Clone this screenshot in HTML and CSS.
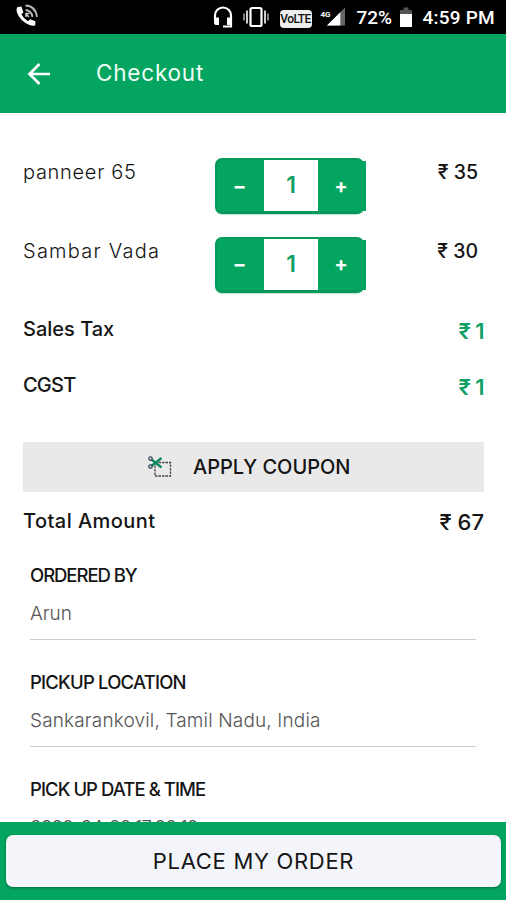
FILE: index.html
```html
<!DOCTYPE html>
<html lang="en">
<head>
<meta charset="utf-8">
<title>Checkout</title>
<link rel="stylesheet" href="styles.css">
</head>
<body>
<div class="screen">
  <div class="status">
    <svg class="call" width="24" height="24" viewBox="0 0 24 24" fill="#fff"><path d="M2.200 3.200 6.500 2.600 8.400 8.400 6.400 10.300Q8.600 14.800 13 17.200L15.200 15.200 20.400 17.200 20.200 21.200Q18 22.300 14.500 21Q5 17.300 1.900 8.300Q1 4.600 2.200 3.200Z"/><g fill="none" stroke="#bbb" stroke-width="1.800"><path d="M10.500 6Q16.500 6.500 17.500 13"/><path d="M10.500 1.500Q20.500 2 22 13"/></g><path d="M10.500 9.500 14 13M11 13V9.500H14.500" fill="none" stroke="#ccc" stroke-width="1.500"/></svg>
    <div class="status-right">
      <svg class="headset" width="20" height="23" viewBox="0 0 20 23"><path d="M2 13V9.500a8 8 0 0 1 16 0V20.500H10" fill="none" stroke="#fff" stroke-width="2.200"/><path d="M1 11.500H6V19H3Q1 19 1 17ZM14 11.500H19V19H14Z" fill="#fff"/></svg>
      <svg class="vibrate" width="26" height="22" viewBox="0 0 26 22" fill="none" stroke="#fff"><rect x="7.500" y="2" width="11" height="18" rx="1.500" stroke-width="2.200"/><path d="M4 4.500V17.500M22 4.500V17.500" stroke="#ccc" stroke-width="2"/><path d="M1 7.500V14.500M25 7.500V14.500" stroke="#aaa" stroke-width="1.500"/></svg>
      <span class="volte">VoLTE</span>
      <span class="net">4G</span>
      <svg class="signal" width="20" height="20" viewBox="0 0 21 20"><path d="M1 19 20 0V19Z" fill="#666"/><path d="M1 19 15 5V19Z" fill="#fff"/></svg>
      <span class="pct">72%</span>
      <svg class="battery" width="12" height="21" viewBox="0 0 12 21"><path d="M0 7V3H3.500V0.500H8.500V3H12V7Z" fill="#555"/><path d="M0 7H12V20H0Z" fill="#fff"/></svg>
      <span class="time">4:59 PM</span>
    </div>
  </div>
  <header class="bar">
    <svg width="24" height="24" viewBox="0 0 24 24" fill="none" stroke="#fff" stroke-width="2.700"><path d="M23 12H2.500M12.500 2 2.500 12 12.500 22"/></svg>
    <h1>Checkout</h1>
  </header>
  <main>
    <div class="item">
      <span class="name n1">panneer 65</span>
      <div class="stepper"><button>−</button><b>1</b><button>+</button></div>
      <span class="price">₹ 35</span>
    </div>
    <div class="item">
      <span class="name n2">Sambar Vada</span>
      <div class="stepper"><button>−</button><b>1</b><button>+</button></div>
      <span class="price">₹ 30</span>
    </div>
    <div class="line tax"><span class="t1">Sales Tax</span><span class="green">₹ 1</span></div>
    <div class="line tax"><span class="t2">CGST</span><span class="green">₹ 1</span></div>
    <button class="coupon">
      <svg width="24" height="22" viewBox="0 0 24 22" fill="none"><rect x="7" y="6.500" width="15.500" height="13.500" stroke="#444" stroke-width="1.300" stroke-dasharray="2.500 1"/><path d="M3.500 3.500 13.500 11.500M3.500 10 13.500 2" stroke="#0b8a62" stroke-width="2.300"/><circle cx="2.500" cy="2.600" r="1.700" stroke="#345" stroke-width="1.200"/><circle cx="2.500" cy="10.500" r="1.700" stroke="#345" stroke-width="1.200"/></svg>
      <span>APPLY COUPON</span>
    </button>
    <div class="line total"><span class="t3">Total Amount</span><span class="sum">₹ 67</span></div>
    <section class="field"><h2 class="h-a">ORDERED BY</h2><p class="p-a">Arun</p></section>
    <section class="field"><h2 class="h-b">PICKUP LOCATION</h2><p class="p-b">Sankarankovil, Tamil Nadu, India</p></section>
    <section class="field"><h2 class="h-c">PICK UP DATE &amp; TIME</h2><p class="p-c">2020-04-20 17:20:10</p></section>
  </main>
  <footer><button>PLACE MY ORDER</button></footer>
</div>
</body>
</html>
```
FILE: styles.css
```css
* { box-sizing: border-box; margin: 0; padding: 0; }
body { background: #fff; font-family: Inter, "Liberation Sans", sans-serif; color: #151515; }
button { border: 0; background: none; font: inherit; color: inherit; }
.screen { width: 506px; height: 900px; overflow: hidden; display: flex; flex-direction: column; }
span, h1, h2, p { white-space: nowrap; }

.status { height: 34px; flex: none; background: #000; color: #fff; display: flex; align-items: center; justify-content: space-between; padding: 0 10px 0 15px; font-family: Roboto, sans-serif; }
.call { margin-top: -2px; }
.status-right { display: flex; align-items: center; height: 34px; }
.headset { margin-right: 10px; }
.vibrate { margin: 0 11px 0 0; }
.volte { width: 32px; height: 18px; border-radius: 4px; background: #eee; color: #111; font-size: 12px; line-height: 19px; font-weight: 500; letter-spacing: -0.6px; text-align: center; margin-top: 3px; }
.net { font-size: 8px; font-weight: 700; margin: -6px -5px 0 9px; width: 10px; }
.signal { margin-right: 11px; }
.pct, .time { font-size: 19px; font-weight: 500; line-height: 34px; padding-top: 2px; }
.pct { width: 38px; }
.battery { margin: 0 11px 0 5px; }
.time { width: 73.500px; letter-spacing: 0.2px; }

.bar { height: 79px; flex: none; background: #03a560; display: flex; align-items: center; gap: 45px; padding: 0 0 0 27px; color: #effff7; }
.bar h1 { font-size: 22.500px; font-weight: 400; line-height: 28px; letter-spacing: 0.8px; margin-top: -1px; }

main { flex: 1; min-height: 0; overflow: hidden; padding: 45px 22px 0 23px; }
.item { height: 78.500px; display: grid; grid-template-columns: 192px 1fr auto; align-items: start; }
.name { font-size: 20px; font-weight: 300; line-height: 28px; }
.n1 { letter-spacing: 0.7px; }
.n2 { letter-spacing: 1.25px; }
.price { font-size: 19.500px; font-weight: 500; line-height: 28px; padding-right: 6px; }
.stepper { position: relative; width: 149px; height: 56px; border: 2px solid #04995a; border-bottom-width: 3px; border-radius: 7px; background: #03a560; display: grid; grid-template-columns: 47px 54px 1fr; color: #fff; box-shadow: 0 1px 1px #bde0d0; }
.stepper::after { content: ""; position: absolute; top: 1px; bottom: 0; right: -4px; width: 6px; background: #03a560; }
.stepper b { background: #fff; color: #109f65; font-size: 23px; font-weight: 600; line-height: 50px; text-align: center; }
.stepper button { font-size: 20px; font-weight: 700; line-height: 48px; }
.stepper button:first-child { padding-right: 2px; }
.stepper button:last-child { padding-left: 2px; }
.line { display: flex; justify-content: space-between; align-items: center; font-weight: 500; font-size: 20px; height: 56px; line-height: 28px; }
.tax { align-items: flex-start; }
.t2 { letter-spacing: -0.8px; }
.t3 { letter-spacing: 0.45px; }
.green { color: #109f65; font-size: 22px; font-weight: 600; padding-top: 2px; letter-spacing: -0.6px; }
.coupon { width: 461px; height: 50px; margin-top: 15px; background: #e9e9e9; display: flex; align-items: center; padding: 0 0 0 125px; gap: 21px; font-size: 20px; font-weight: 500; }
.total { height: 57px; }
.sum { font-size: 22px; padding-top: 3px; }
.field { height: 91px; margin: 0 8px 16px 7px; border-bottom: 1px solid #ccc; }
.field h2 { font-size: 18.500px; font-weight: 500; line-height: 28px; padding-top: 12px; }
.field p { font-size: 19px; font-weight: 300; line-height: 28px; color: #555; padding-top: 11px; }
.field .h-a { letter-spacing: -1.050px; }
.field .h-b { letter-spacing: -0.800px; }
.field .h-c { letter-spacing: -0.950px; }
.field .p-b { letter-spacing: 0.150px; }
.field .p-c { letter-spacing: -1px; }

footer { height: 78px; flex: none; background: #03a560; padding: 13px 5px 0 6px; }
footer button { display: block; width: 495px; height: 52px; background: #f3f5fa; border-radius: 7px; font-size: 22px; line-height: 50px; letter-spacing: 0.700px; box-shadow: 0 1px 3px #006b3c; }
```
